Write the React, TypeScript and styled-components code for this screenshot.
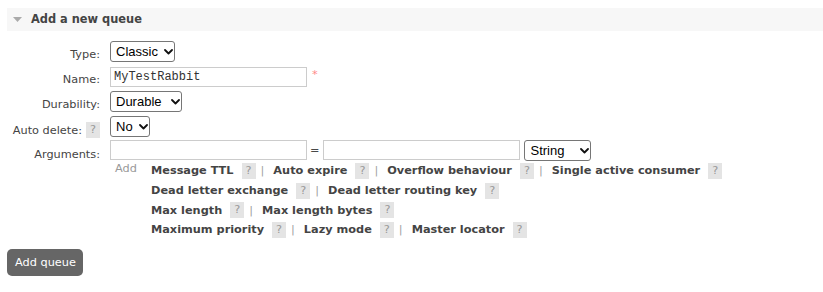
import React from "react";
import styled, { createGlobalStyle } from "styled-components";

const GlobalStyle = createGlobalStyle`
  html, body { margin: 0; padding: 0; background: #fff; }
  body {
    font-family: "DejaVu Sans", Verdana, sans-serif;
    font-size: 11.3px;
    color: #484848;
  }
  * { box-sizing: border-box; }
`;

const Page = styled.div`
  padding: 8px 0 0 7px;
`;

const SectionHeader = styled.div`
  height: 23px;
  background: #f7f7f7;
  display: flex;
  align-items: center;
  padding-left: 6px;
  gap: 9px;
`;

const Title = styled.h2`
  margin: 0;
  font-size: 11.4px;
  font-weight: bold;
  color: #444;
  line-height: 15px;
`;

const Form = styled.form`
  margin: 8px 0 0;
`;

const Row = styled.div<{ $h?: number }>`
  display: grid;
  grid-template-columns: 93px 1fr;
  column-gap: 10px;
  min-height: ${(p) => p.$h ?? 25}px;
`;

const Label = styled.label`
  display: flex;
  justify-content: flex-end;
  align-items: center;
  align-self: start;
  gap: 4px;
  padding-top: 8px;
  line-height: 15px;
  white-space: nowrap;
  color: #444;
`;

const Control = styled.div`
  display: flex;
  align-items: center;
`;

const ArgColumn = styled.div`
  display: flex;
  flex-direction: column;
`;

const ArgLine = styled.div`
  display: flex;
  align-items: center;
  height: 22px;
`;

const TextInput = styled.input`
  width: 197px;
  height: 20px;
  border: 1px solid #ccc;
  padding: 0 3px;
  font-family: "Liberation Mono", "Courier New", monospace;
  font-size: 12px;
  color: #333;
  background: #fff;
  outline: none;
`;

const Mandatory = styled.span`
  color: #f88;
  margin-left: 5px;
  margin-bottom: 3px;
  font-size: 11.3px;
  line-height: 14px;
`;

const Equals = styled.span`
  margin: 0 4px 0 3px;
  color: #484848;
`;

const SelectWrap = styled.span<{ $w: number; $ml?: number }>`
  position: relative;
  display: inline-flex;
  width: ${(p) => p.$w}px;
  height: 21px;
  margin-left: ${(p) => p.$ml ?? 0}px;
`;

const Select = styled.select`
  appearance: none;
  -webkit-appearance: none;
  width: 100%;
  height: 100%;
  border: 1px solid #767676;
  border-radius: 3px;
  background: #fff;
  color: #000;
  font-family: "Liberation Sans", Arial, sans-serif;
  font-size: 13px;
  padding: 0 0 0 5px;
  outline: none;
`;

const Chevron = styled.svg`
  position: absolute;
  right: 2px;
  top: 8px;
  pointer-events: none;
`;

const ArgLinks = styled.div`
  display: flex;
  align-items: flex-start;
`;

const AddWord = styled.span`
  width: 41px;
  padding-left: 5px;
  padding-top: 1px;
  line-height: 14px;
  color: #999;
`;

const LinkRows = styled.div`
  display: flex;
  flex-direction: column;
`;

const LinkRow = styled.div`
  display: flex;
  align-items: center;
  height: 19.7px;
  white-space: nowrap;
`;

const ArgLink = styled.span`
  font-weight: bold;
  color: #444;
  cursor: pointer;
`;

const Help = styled.span<{ $ml?: number }>`
  display: inline-flex;
  align-items: center;
  justify-content: center;
  width: 14px;
  height: 16px;
  background: #e4e4e4;
  color: #999;
  font-weight: normal;
  margin-left: ${(p) => p.$ml ?? 8}px;
  line-height: 16px;
`;

const Sep = styled.span`
  margin: 0 9px 0 5px;
  color: #a0a0a0;
`;

const SubmitButton = styled.button`
  margin-top: 9px;
  height: 27px;
  padding: 0 7px 0 8px;
  background: #666;
  color: #fff;
  border: none;
  border-radius: 5px;
  font-family: "DejaVu Sans", Verdana, sans-serif;
  font-size: 11.3px;
  cursor: pointer;
`;

const Triangle = () => (
  <svg width="9" height="5" viewBox="0 0 9 5">
    <polygon points="0,0 9,0 4.5,5" fill="#aaa" />
  </svg>
);

const DropSelect = ({ w, ml, options }: { w: number; ml?: number; options: string[] }) => (
  <SelectWrap $w={w} $ml={ml}>
    <Select defaultValue={options[0]}>
      {options.map((o) => (
        <option key={o}>{o}</option>
      ))}
    </Select>
    <Chevron width="9" height="6" viewBox="0 0 9 6">
      <polyline
        points="1,1 4.5,4.5 8,1"
        fill="none"
        stroke="#111"
        strokeWidth="1.8"
        strokeLinecap="round"
        strokeLinejoin="round"
      />
    </Chevron>
  </SelectWrap>
);

const linkGroups: string[][] = [
  ["Message TTL", "Auto expire", "Overflow behaviour", "Single active consumer"],
  ["Dead letter exchange", "Dead letter routing key"],
  ["Max length", "Max length bytes"],
  ["Maximum priority", "Lazy mode", "Master locator"],
];

export default function App() {
  return (
    <>
      <GlobalStyle />
      <Page>
        <SectionHeader>
          <Triangle />
          <Title>Add a new queue</Title>
        </SectionHeader>
        <Form onSubmit={(e) => e.preventDefault()}>
          <Row>
            <Label>Type:</Label>
            <Control>
              <DropSelect w={65} options={["Classic", "Quorum"]} />
            </Control>
          </Row>
          <Row>
            <Label>Name:</Label>
            <Control>
              <TextInput defaultValue="MyTestRabbit" />
              <Mandatory>*</Mandatory>
            </Control>
          </Row>
          <Row>
            <Label>Durability:</Label>
            <Control>
              <DropSelect w={72} options={["Durable", "Transient"]} />
            </Control>
          </Row>
          <Row>
            <Label>
              Auto delete: <Help $ml={0}>?</Help>
            </Label>
            <Control>
              <DropSelect w={40} options={["No", "Yes"]} />
            </Control>
          </Row>
          <Row $h={22}>
            <Label>Arguments:</Label>
            <ArgColumn>
              <ArgLine>
                <TextInput />
                <Equals>=</Equals>
                <TextInput />
                <DropSelect w={67} ml={4} options={["String", "Number", "Boolean", "List"]} />
              </ArgLine>
              <ArgLinks>
                <AddWord>Add</AddWord>
                <LinkRows>
                  {linkGroups.map((group, gi) => (
                    <LinkRow key={gi}>
                      {group.map((name, i) => (
                        <React.Fragment key={name}>
                          <ArgLink>{name}</ArgLink>
                          <Help>?</Help>
                          {i < group.length - 1 && <Sep>|</Sep>}
                        </React.Fragment>
                      ))}
                    </LinkRow>
                  ))}
                </LinkRows>
              </ArgLinks>
            </ArgColumn>
          </Row>
          <SubmitButton type="submit">Add queue</SubmitButton>
        </Form>
      </Page>
    </>
  );
}
